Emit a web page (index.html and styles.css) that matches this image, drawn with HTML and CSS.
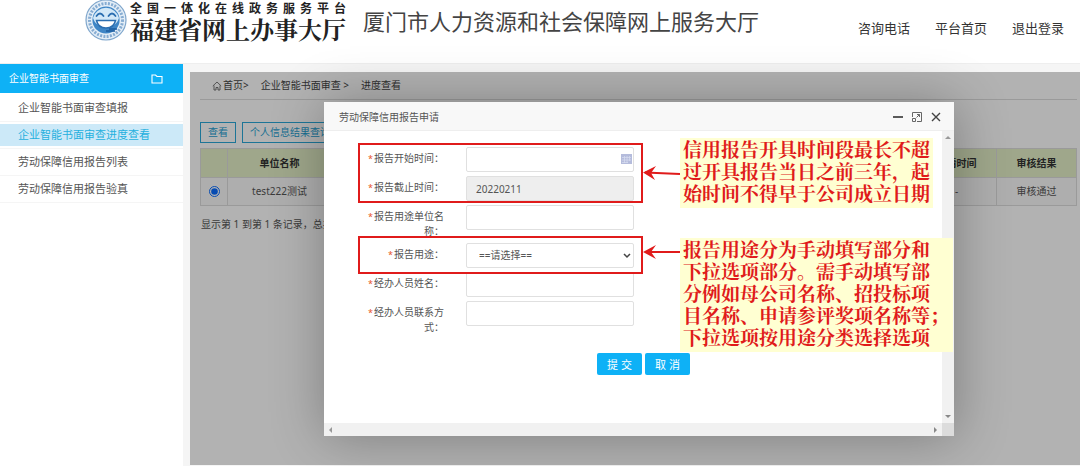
FILE: index.html
```html
<!DOCTYPE html>
<html lang="zh-CN">
<head>
  <meta charset="UTF-8" />
  <meta name="viewport" content="width=device-width, initial-scale=1.0" />
  <title>厦门市人力资源和社会保障网上服务大厅</title>
  <link rel="stylesheet" href="styles.css">
</head>
<body>
  <header class="site-header">
    <svg class="logo" viewBox="0 0 42 42" aria-hidden="true">
      <circle cx="21" cy="20" r="20" fill="#e4eef7" stroke="#7fa6cc" stroke-width="1.2"/>
      <circle cx="21" cy="20" r="16.5" fill="none" stroke="#86acd2" stroke-width="3" stroke-dasharray="2 1.3"/>
      <circle cx="21" cy="20" r="13.6" fill="#3f86c6"/>
      <path d="M8 18a13.4 13.4 0 0 1 26 0c-2 6-6 9-13 9S10 24 8 18z" fill="#d3e8f7"/>
      <path d="M11.500 16q3.500-5 7 0M23.500 16q3.500-5 7 0" fill="none" stroke="#2b6eb0" stroke-width="1.800" stroke-linecap="round"/>
      <path d="M11.500 20.500h19c-1 5-4.500 7.500-9.500 7.500s-8.500-2.500-9.500-7.500z" fill="#fff" stroke="#2b6eb0" stroke-width="1.500"/>
      <path d="M21 31h9M24 29h8" stroke="#1c5c9e" stroke-width="1.500"/>
    </svg>
    <div class="brand">
      <span class="brand-sub">全国一体化在线政务服务平台</span>
      <span class="brand-name">福建省网上办事大厅</span>
    </div>
    <h1 class="site-title">厦门市人力资源和社会保障网上服务大厅</h1>
    <nav class="top-nav">
      <a href="#">咨询电话</a>
      <a href="#">平台首页</a>
      <a href="#">退出登录</a>
    </nav>
  </header>

  <div class="layout">
    <aside class="sidebar">
      <div class="sidebar-title">
        <span>企业智能书面审查</span>
        <svg class="folder-icon" viewBox="0 0 12 10" aria-hidden="true">
          <path d="M1 1h3.500l1.500 1.500h5V9H1z" fill="none" stroke="#fff" stroke-width="1.100"/>
        </svg>
      </div>
      <ul class="menu">
        <li><a href="#">企业智能书面审查填报</a></li>
        <li><a href="#" class="active">企业智能书面审查进度查看</a></li>
        <li><a href="#">劳动保障信用报告列表</a></li>
        <li><a href="#">劳动保障信用报告验真</a></li>
      </ul>
    </aside>

    <main class="content">
      <div class="breadcrumb">
        <svg class="home-icon" viewBox="0 0 10 10" aria-hidden="true">
          <path d="M.8 5L5 1l4.200 4M2 4.500V9h2V6.500h2V9h2V4.500" fill="none" stroke="#555" stroke-width=".8"/>
        </svg>
        <a href="#">首页&gt;</a>
        <a href="#">企业智能书面审查 &gt;</a>
        <span>进度查看</span>
      </div>

      <div class="toolbar">
        <button type="button">查看</button>
        <button type="button">个人信息结果查询</button>
      </div>

      <table class="data-table">
        <colgroup>
          <col class="col-check"><col class="col-name"><col><col class="col-time"><col class="col-result">
        </colgroup>
        <thead>
          <tr><th></th><th>单位名称</th><th></th><th>申请时间</th><th>审核结果</th></tr>
        </thead>
        <tbody>
          <tr>
            <td><input type="radio" name="record" aria-label="test222测试" checked></td>
            <td>test222测试</td>
            <td></td>
            <td>-</td>
            <td>审核通过</td>
          </tr>
        </tbody>
      </table>
      <p class="table-info">显示第 1 到第 1 条记录，总共</p>

      <div class="overlay">
        <section class="modal" role="dialog" aria-labelledby="modalTitle">
          <div class="modal-head">
            <h2 id="modalTitle">劳动保障信用报告申请</h2>
            <div class="window-buttons">
              <button type="button" aria-label="最小化">
                <svg viewBox="0 0 12 12"><path d="M1 6h10" stroke="#333" stroke-width="1.600"/></svg>
              </button>
              <button type="button" aria-label="最大化">
                <svg viewBox="0 0 12 12" fill="none" stroke="#666"><path d="M1.500 6V1.500h9v9H6M1.500 7.500v3h3v-3zM5.500 6.500l3-3M6 3.500h2.500V6"/></svg>
              </button>
              <button type="button" aria-label="关闭">
                <svg viewBox="0 0 12 12"><path d="M2 2l8 8M10 2l-8 8" stroke="#444" stroke-width="1.400"/></svg>
              </button>
            </div>
          </div>

          <div class="modal-body">
            <form class="report-form">
              <div class="form-row">
                <label for="startDate"><i>*</i>报告开始时间：</label>
                <div class="field">
                  <input type="text" id="startDate">
                  <svg class="calendar-icon" viewBox="0 0 11 10" aria-hidden="true">
                    <path d="M0 0h11v10H0z" fill="#b5bcdc"/>
                    <path d="M1 3.500h9M1 6h9M1 8.500h6M3.500 2v7M6 2v7M8.500 2v5" stroke="#d8def0" stroke-width=".7"/>
                  </svg>
                </div>
              </div>
              <div class="form-row">
                <label for="endDate"><i>*</i>报告截止时间：</label>
                <div class="field"><input type="text" id="endDate" value="20220211" readonly></div>
              </div>
              <div class="form-row">
                <label for="unitName"><i>*</i>报告用途单位名称：</label>
                <div class="field"><input type="text" id="unitName"></div>
              </div>
              <div class="form-row">
                <label for="purpose"><i>*</i>报告用途：</label>
                <div class="field">
                  <select id="purpose"><option>==请选择==</option></select>
                  <svg class="select-arrow" viewBox="0 0 8 6" aria-hidden="true">
                    <path d="M1 1l3 3 3-3" fill="none" stroke="#444" stroke-width="1.500"/>
                  </svg>
                </div>
              </div>
              <div class="form-row">
                <label for="agentName"><i>*</i>经办人员姓名：</label>
                <div class="field"><input type="text" id="agentName"></div>
              </div>
              <div class="form-row">
                <label for="agentPhone"><i>*</i>经办人员联系方式：</label>
                <div class="field"><input type="text" id="agentPhone"></div>
              </div>
              <div class="form-actions">
                <button type="submit">提 交</button>
                <button type="button">取 消</button>
              </div>
            </form>
          </div>

          <div class="scroll-y">
            <svg viewBox="0 0 8 5"><path d="M1 4l3-3 3 3z" fill="#999"/></svg>
            <svg viewBox="0 0 8 5"><path d="M1 1l3 3 3-3z" fill="#888"/></svg>
          </div>
          <div class="scroll-x">
            <svg viewBox="0 0 5 8"><path d="M4 1L1 4l3 3z" fill="#999"/></svg>
            <svg viewBox="0 0 5 8"><path d="M1 1l3 3-3 3z" fill="#888"/></svg>
          </div>
          <div class="scroll-corner"></div>

          <!-- filling notes laid over the form -->
          <div class="frame frame-date"></div>
          <div class="frame frame-purpose"></div>
          <svg class="arrow arrow-date" viewBox="0 0 38 14" aria-hidden="true">
            <path d="M2 6.500L37 8" stroke="#e01b1b" stroke-width="2"/>
            <path d="M0 6.500L13 0 8 7l4 7z" fill="#e01b1b"/>
          </svg>
          <svg class="arrow arrow-purpose" viewBox="0 0 38 14" aria-hidden="true">
            <path d="M2 7h35" stroke="#e01b1b" stroke-width="2"/>
            <path d="M0 7l13-7-5 7 5 7z" fill="#e01b1b"/>
          </svg>
          <p class="note note-date">信用报告开具时间段最长不超<br>过开具报告当日之前三年，起<br>始时间不得早于公司成立日期</p>
          <p class="note note-purpose">报告用途分为手动填写部分和<br>下拉选项部分。需手动填写部<br>分例如母公司名称、招投标项<br>目名称、申请参评奖项名称等；<br>下拉选项按用途分类选择选项</p>
        </section>
      </div>
    </main>
  </div>
</body>
</html>
```
FILE: styles.css
```css
:root {
  --accent: #0eb1f6;
  --line: #e0e0e0;
  --text: #555;
  --red: #e01b1b;
  --sans: "Noto Sans", "Noto Sans CJK SC", sans-serif;
  --serif: "Noto Serif CJK SC", "Liberation Serif", "Noto Sans CJK SC", serif;
}

* {
  margin: 0;
  padding: 0;
  box-sizing: border-box;
}

body {
  min-height: 100vh;
  display: flex;
  flex-direction: column;
  background: #f5f5f5;
  color: var(--text);
  font-family: var(--sans);
  font-size: 10px;
  line-height: 15px;
}

a {
  color: inherit;
  text-decoration: none;
}

button,
input,
select {
  font: inherit;
  color: inherit;
}

svg {
  display: block;
}

/* header */
.site-header {
  height: 64px;
  flex: none;
  display: flex;
  align-items: flex-start;
  padding: 0 16px 0 85px;
  background: #fff;
  border-bottom: 1px solid #eee;
}

.logo {
  width: 42px;
  height: 42px;
}

.brand {
  display: flex;
  flex-direction: column;
  padding: 1px 0 0 3px;
  color: #222;
  font-weight: 700;
  white-space: nowrap;
}

.brand-sub {
  font-size: 12px;
  line-height: 15px;
  letter-spacing: 5px;
}

.brand-name {
  font-family: var(--serif);
  font-size: 24px;
  line-height: 26px;
}

.site-title {
  padding-left: 12px;
  color: #444;
  font-size: 22px;
  font-weight: 400;
  line-height: 42px;
  white-space: nowrap;
}

.top-nav {
  display: flex;
  gap: 25px;
  margin-left: auto;
  font-size: 13px;
  line-height: 56px;
  color: #333;
  white-space: nowrap;
}

/* sidebar */
.layout {
  flex: 1;
  display: flex;
}

.sidebar {
  width: 183px;
  flex: none;
  background: #fff;
}

.sidebar-title {
  height: 29px;
  display: flex;
  align-items: center;
  justify-content: space-between;
  padding: 0 20px 0 9px;
  background: var(--accent);
  color: #fff;
}

.folder-icon {
  width: 12px;
  height: 10px;
}

.menu {
  list-style: none;
  padding-top: 2px;
}

.menu li {
  height: 27px;
  padding: 2px 0;
  border-bottom: 1px solid #f5f5f5;
}

.menu a {
  display: block;
  padding-left: 18px;
  font-size: 11px;
  line-height: 22px;
}

.menu .active {
  background: #cce9f8;
  color: #25b0de;
}

/* content */
.content {
  flex: 1;
  position: relative;
  margin: 8px 0 1px 7px;
  padding: 0 3px 0 10px;
  background: #fff;
}

.breadcrumb {
  height: 28px;
  display: flex;
  align-items: center;
  padding-left: 12px;
  border-bottom: 1px solid #ddd;
  color: #444;
}

.breadcrumb a {
  margin-right: 12px;
}

.home-icon {
  width: 10px;
  height: 10px;
  margin-right: 1px;
}

.toolbar {
  display: flex;
  gap: 6px;
  padding: 22px 0 5px;
}

.toolbar button {
  height: 21px;
  padding: 0 7px;
  background: #fff;
  border: 1px solid #2aa8d8;
  color: #1ea0d2;
}

.data-table {
  width: 100%;
  table-layout: fixed;
  border-collapse: collapse;
  text-align: center;
}

.col-check { width: 27px; }
.col-name { width: 104px; }
.col-time,
.col-result { width: 80px; }

.data-table th,
.data-table td {
  border: 1px solid #ddd;
}

.data-table th {
  height: 29px;
  background: #e4f0c8;
  color: #333;
}

.data-table td {
  height: 28px;
  background: #fafafa;
}

.data-table input {
  display: block;
  width: 11px;
  height: 11px;
  margin: 0 auto;
  accent-color: #0a6cff;
}

.table-info {
  padding: 11px 1px;
}

/* modal */
.overlay {
  position: absolute;
  inset: 0;
  display: flex;
  padding: 30px 126px 29px 134px;
  background: rgba(0, 0, 0, 0.3);
}

.modal {
  flex: 1;
  position: relative;
  display: grid;
  grid-template-columns: 1fr 12px;
  grid-template-rows: 29px 1fr 13px;
  background: #fff;
  box-shadow: 1px 1px 50px rgba(0, 0, 0, 0.3);
}

.modal-head {
  grid-column: 1 / 3;
  display: flex;
  align-items: center;
  justify-content: space-between;
  padding: 2px 12px 0 15px;
  background: #f8f8f8;
  border-bottom: 1px solid #eee;
}

.modal-head h2 {
  font-size: 10px;
  font-weight: 400;
}

.window-buttons {
  display: flex;
  gap: 7px;
}

.window-buttons button {
  width: 12px;
  height: 12px;
  background: none;
  border: none;
}

.report-form {
  display: flex;
  flex-direction: column;
  gap: 4px;
  padding: 16px 0 0 42px;
}

.form-row {
  display: grid;
  grid-template-columns: 78px 168px;
  align-items: start;
  gap: 22px;
}

.form-row label {
  padding-top: 4px;
  text-align: right;
}

.form-row i {
  margin-right: 1px;
  color: #e8541e;
  font-size: 9px;
  font-style: normal;
}

.field {
  position: relative;
}

.field input,
.field select {
  display: block;
  width: 100%;
  height: 25px;
  padding: 0 9px;
  background: #fff;
  border: 1px solid var(--line);
  border-radius: 2px;
}

.field select {
  appearance: none;
  padding: 0 12px;
}

.field input[readonly] {
  background: #eee;
}

.calendar-icon {
  position: absolute;
  top: 7px;
  right: 2px;
  width: 11px;
  height: 10px;
}

.select-arrow {
  position: absolute;
  top: 10px;
  right: 3px;
  width: 8px;
  height: 6px;
}

.form-actions {
  display: flex;
  gap: 3px;
  padding: 14px 0 0 231px;
}

.form-actions button {
  width: 45px;
  height: 22px;
  background: var(--accent);
  border: none;
  border-radius: 2px;
  color: #fff;
  font-size: 11px;
}

.scroll-y,
.scroll-x {
  display: flex;
  align-items: center;
  justify-content: space-between;
  padding: 4px;
  background: #f1f1f1;
}

.scroll-y {
  flex-direction: column;
}

.scroll-y svg {
  width: 8px;
  height: 5px;
}

.scroll-x svg {
  width: 5px;
  height: 8px;
}

.scroll-corner {
  background: #dcdcdc;
}

/* notes over the form */
.frame,
.arrow,
.note {
  position: absolute;
}

.frame {
  left: 34px;
  width: 285px;
  border: 2px solid var(--red);
}

.frame-date {
  top: 41px;
  height: 60px;
}

.frame-purpose {
  top: 134px;
  height: 38px;
}

.arrow {
  left: 319px;
  width: 38px;
  height: 14px;
}

.arrow-date { top: 64px; }
.arrow-purpose { top: 143px; }

.note {
  left: 356px;
  padding: 0 3px 4px;
  background: #ffffd2;
  color: var(--red);
  font-family: var(--serif);
  font-size: 19px;
  font-weight: 700;
  line-height: 22px;
  white-space: nowrap;
}

.note-date {
  top: 36px;
}

.note-purpose {
  top: 136px;
  right: 1px;
}
```
